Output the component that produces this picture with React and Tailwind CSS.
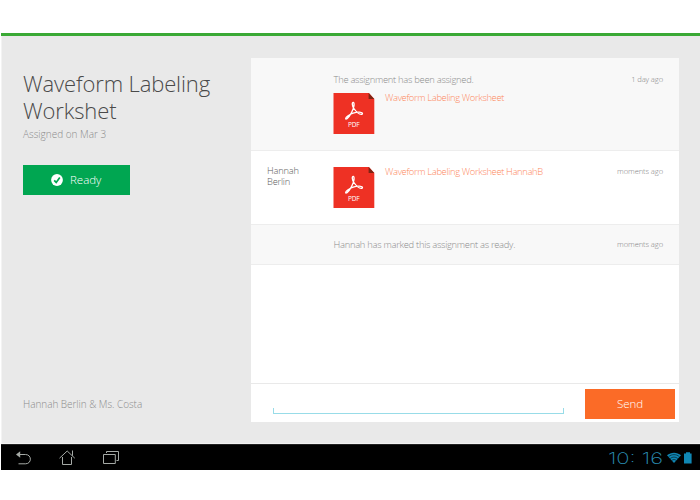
import React from "react";

function PdfIcon() {
  return (
    <svg width="42" height="42" viewBox="0 0 42 42" className="block shrink-0">
      <path d="M0.5 0H36L41.3 6V41H0.5Z" fill="#ee3124" />
      <path d="M35.6 0L41.3 6H35.6Z" fill="#7d2413" />
      <path
        fill="none"
        stroke="#fff"
        strokeLinecap="round"
        strokeLinejoin="round"
        strokeWidth="1.3"
        d="M20.2 9.4C18.8 9.5 19 12.7 20.9 15.5C22.9 18.4 25.6 21.2 28.3 21.3C30.2 21.2 29.6 19.4 27.8 19.3C23.7 18.9 18.6 20.3 14.7 23.1C12 25.1 12.2 26.7 14 25.7C17 23.1 20.4 17.1 21 12.6C21.2 10.7 21 9.4 20.2 9.4Z"
      />
      <text
        x="20.9"
        y="34"
        textAnchor="middle"
        textLength="11.6"
        fill="#fff"
        className="font-['Open_Sans',sans-serif] text-[6.5px] font-normal"
      >
        PDF
      </text>
    </svg>
  );
}

function Row({ className, author, message, file, fileClass, time }) {
  return (
    <div className={"flex border-b border-[#ededed] px-4 " + className}>
      <div className="w-[66px] shrink-0 text-[9.3px] leading-[10.5px] tracking-[-0.2px] text-[#5c5c5c]">
        {author}
      </div>
      <div className="grow">
        {message && (
          <div className="ml-[0.5px] whitespace-nowrap text-[9.4px] leading-[11px] tracking-[-0.28px] text-[#8c8c8c]">
            {message}
          </div>
        )}
        {file && (
          <div className={"flex " + fileClass}>
            <PdfIcon />
            <div className="-mt-px ml-[10px] whitespace-nowrap text-[9.4px] leading-[11px] tracking-[-0.35px] text-[#fd875c]">
              {file}
            </div>
          </div>
        )}
      </div>
      <div className="shrink-0 text-[7.6px] leading-[11px] tracking-[-0.1px] text-[#808080]">{time}</div>
    </div>
  );
}

export default function App() {
  return (
    <div className="flex h-[500px] w-[700px] flex-col overflow-hidden bg-white pl-px font-['Open_Sans','Noto_Sans',sans-serif] font-light">
      <div className="h-[33px] shrink-0" />
      <div className="h-[3px] shrink-0 bg-[#3aa935]" />
      <main className="flex h-[408px] shrink-0 border-b border-l border-[#f3f3f3] bg-[#e9e9e9]">
        <aside className="flex w-[249px] shrink-0 flex-col pl-[21px] pt-[34px]">
          <h1 className="whitespace-nowrap text-[22px] leading-[27px] tracking-[-0.13px] text-[#4a4a4a]">
            Waveform Labeling
            <br />
            Workshet
          </h1>
          <p className="mt-[3px] text-[10px] leading-[14px] text-[#8c8c8c]">Assigned on Mar 3</p>
          <button className="mt-[24px] flex h-[30px] w-[106.5px] shrink-0 items-center bg-[#00a651] pl-[28px] text-[11.5px] font-light text-white">
            <svg width="12" height="12" viewBox="0 0 12 12" className="mr-[7px]">
              <circle cx="6" cy="6" r="5.9" fill="#fff" />
              <path d="M3.2 6.3L5.2 8.4L8.8 3.5" fill="none" stroke="#00a651" strokeWidth="1.7" />
            </svg>
            Ready
          </button>
          <p className="mb-[32px] mt-auto text-[10px] leading-[14px] tracking-[-0.04px] text-[#8c8c8c]">
            Hannah Berlin &amp; Ms. Costa
          </p>
        </aside>
        <section className="mt-[22px] flex h-[364px] w-[428px] shrink-0 flex-col bg-white">
          <Row
            className="h-[93px] bg-[#f8f8f8] pt-[16px]"
            message="The assignment has been assigned."
            file="Waveform Labeling Worksheet"
            fileClass="mt-[8px]"
            time="1 day ago"
          />
          <Row
            className="h-[74px] pt-[15px]"
            author={<>Hannah<br />Berlin</>}
            file="Waveform Labeling Worksheet HannahB"
            fileClass="mt-[0.6px]"
            time="moments ago"
          />
          <Row
            className="h-[40px] bg-[#f8f8f8] pt-[14px]"
            message="Hannah has marked this assignment as ready."
            time="moments ago"
          />
          <div className="grow" />
          <div className="flex h-[39px] shrink-0 border-t border-[#e9e9e9]">
            <div className="ml-[22px] mt-[24px] h-[6px] w-[291px] shrink-0 border-x border-b border-[#98dce8]" />
            <button className="ml-[21px] mt-[5px] h-[30px] w-[90px] bg-[#fb6b27] text-[11.5px] font-light leading-[14px] text-white">
              Send
            </button>
          </div>
        </section>
      </main>
      <nav className="flex h-[26px] shrink-0 items-center border-t border-[#222] bg-black">
        <svg width="120" height="25" viewBox="1 445 120 25" fill="none" stroke="#a5aaa6" strokeWidth="1">
          <path d="M19 454.5H25.5C32 454.5 32 463.8 25.5 463.8H18.5" />
          <path d="M16 454.5L20.2 451.3V457.7Z" fill="#a5aaa6" stroke="none" />
          <path d="M59.5 458.2L67.2 451L74.8 458.2M62.5 457V464.5H71.5V457M72.5 455.8V450.5" />
          <path d="M103.5 454.5H115.3V463.5H103.5ZM106.5 453V451.5H118.5V460.5H116.5" />
        </svg>
        <div className="ml-auto flex items-center">
          <svg width="56" height="18" viewBox="0 0 56 18" className="block">
            <text
              x="-1"
              y="14.7"
              textLength="55"
              lengthAdjust="spacingAndGlyphs"
              fill="#2a8db2"
              className="font-['Inter',sans-serif] text-[15.5px] font-extralight"
            >
              10: 16
            </text>
          </svg>
          <svg width="14" height="12" viewBox="0 0 14 12" className="ml-[2px]">
            <path d="M0 3.3C4-.2 10-.2 14 3.3L7 11Z" fill="#1087b4" />
            <path d="M1.6 4.6C5 2 9 2 12.4 4.6M3.2 6.5C5.6 4.6 8.4 4.6 10.8 6.5M4.8 8.4C6.2 7.3 7.8 7.3 9.2 8.4" fill="none" stroke="#000" strokeWidth=".55" />
          </svg>
          <svg width="8" height="12" viewBox="0 0 8 12" className="ml-[3px] mr-[8px]">
            <path d="M0 1.5H2V.3H6V1.5H7.6V11.4H0Z" fill="#1087b4" />
          </svg>
        </div>
      </nav>
    </div>
  );
}
